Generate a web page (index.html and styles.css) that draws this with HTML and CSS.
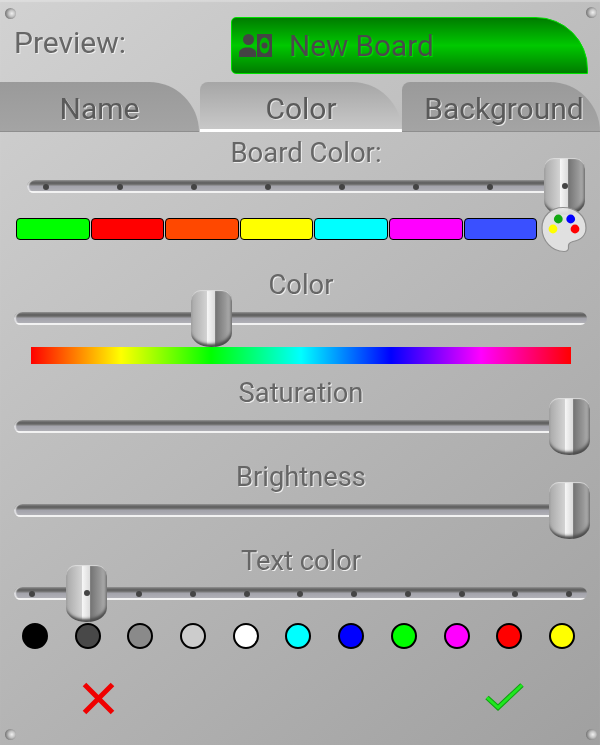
FILE: index.html
```html
<!DOCTYPE html>
<html lang="en">
<head>
    <meta charset="UTF-8">
    <title>Board Color</title>
    <link rel="stylesheet" href="styles.css">
</head>
<body>
    <div class="panel">
        <span class="rivet rivet-tl"></span>
        <span class="rivet rivet-tr"></span>
        <span class="rivet rivet-bl"></span>
        <span class="rivet rivet-br"></span>

        <div class="preview-row">
            <div class="preview-label">Preview:</div>
            <div class="preview-chip">
                <svg class="board-icon" width="34" height="24" viewBox="0 0 34 24">
                    <circle cx="9.500" cy="5.500" r="5.500" fill="#444"/>
                    <path d="M0 23v-4c0-3.500 4-5.500 8.500-5.500s8.500 2 8.500 5.500v4z" fill="#444"/>
                    <rect x="18" y="0" width="15" height="23" fill="#444"/>
                    <ellipse cx="25.500" cy="11.500" rx="5" ry="8" fill="#00b400"/>
                    <circle cx="25.500" cy="11.500" r="3" fill="#444"/>
                </svg>
                <span class="preview-text">New Board</span>
            </div>
        </div>

        <div class="tabs">
            <div class="tab tab-name">Name</div>
            <div class="tab tab-color">Color</div>
            <div class="tab tab-background">Background</div>
        </div>

        <div class="field-label label-board">Board Color:</div>
        <div class="track track-board">
            <i></i><i></i><i></i><i></i><i></i><i></i><i></i><i></i>
            <div class="thumb" style="left: 517px"><i></i></div>
        </div>
        <div class="swatch-row">
            <div class="swatch" style="background: #00ff00"></div>
            <div class="swatch" style="background: #ff0000"></div>
            <div class="swatch" style="background: #ff4800"></div>
            <div class="swatch" style="background: #ffff00"></div>
            <div class="swatch" style="background: #00ffff"></div>
            <div class="swatch" style="background: #ff00ff"></div>
            <div class="swatch" style="background: #3a50ff"></div>
            <svg class="palette" width="48" height="48" viewBox="0 0 48 48">
                <path d="M23 1.500C36 1.500 46 10 46 22C46 29 41 34 33 35.500C29 36.500 28 38 28.500 41C29 44 27 45.500 24 45.500C12 45.500 2 35 2 22C2 10 11 1.500 23 1.500z" fill="#e4e4e4" fill-opacity="0.92" stroke="#8f8f8f" stroke-width="1.200"/>
                <circle cx="18.300" cy="13" r="4.400" fill="#12a812"/>
                <circle cx="30.700" cy="13" r="4.400" fill="#0000ff"/>
                <circle cx="13" cy="23" r="4.400" fill="#ffff00"/>
                <circle cx="35" cy="23" r="4.400" fill="#ff0000"/>
            </svg>
        </div>

        <div class="field-label label-color">Color</div>
        <div class="track track-full">
            <div class="thumb" style="left: 177px"></div>
        </div>
        <div class="hue-bar"></div>

        <div class="field-label label-saturation">Saturation</div>
        <div class="track track-full">
            <div class="thumb" style="left: 535px"></div>
        </div>

        <div class="field-label label-brightness">Brightness</div>
        <div class="track track-full">
            <div class="thumb" style="left: 535px"></div>
        </div>

        <div class="field-label label-text">Text color</div>
        <div class="track track-full track-text">
            <i></i><i></i><i></i><i></i><i></i><i></i><i></i><i></i><i></i><i></i><i></i>
            <div class="thumb" style="left: 52px"><i></i></div>
        </div>

        <div class="dot-row">
            <div class="dot" style="background: #000000"></div>
            <div class="dot" style="background: #484848"></div>
            <div class="dot" style="background: #8a8a8a"></div>
            <div class="dot" style="background: #cccccc"></div>
            <div class="dot" style="background: #ffffff"></div>
            <div class="dot" style="background: #00ffff"></div>
            <div class="dot" style="background: #0000ff"></div>
            <div class="dot" style="background: #00ff00"></div>
            <div class="dot" style="background: #ff00ff"></div>
            <div class="dot" style="background: #ff0000"></div>
            <div class="dot" style="background: #ffff00"></div>
        </div>

        <div class="actions">
            <svg width="33" height="33" viewBox="0 0 33 33">
                <path d="M2.500 2.500l28 28M30.500 2.500l-28 28" stroke="#f00000" stroke-width="5" fill="none"/>
            </svg>
            <svg width="40" height="32" viewBox="0 0 40 32">
                <path d="M2 15.500l11 10L37 3" stroke="#119f11" stroke-width="5" fill="none"/>
                <path d="M2 15.500l11 10L37 3" stroke="#1fe81f" stroke-width="3" fill="none"/>
            </svg>
        </div>
    </div>
</body>
</html>
```

FILE: styles.css
```css
html, body {
    margin: 0;
    padding: 0;
}
body {
    font-family: Roboto, sans-serif;
    color: #666;
}
.panel {
    position: relative;
    width: 600px;
    height: 745px;
    overflow: hidden;
    background: linear-gradient(141deg, #d2d2d2 0%, #a0a0a0 100%);
    box-shadow: inset 0 2px 1px rgba(255, 255, 255, 0.25);
}
.rivet {
    position: absolute;
    width: 11px;
    height: 11px;
    border-radius: 50%;
    background: radial-gradient(circle at 62% 50%, #f0f0f0 0%, #c4c4c4 35%, #777 75%, #999 100%);
}
.rivet-tl { left: 5px; top: 8px; }
.rivet-tr { left: 586px; top: 7px; }
.rivet-bl { left: 5px; top: 729px; }
.rivet-br { left: 586px; top: 729px; }

.preview-row {
    display: flex;
    height: 82px;
    box-sizing: border-box;
    padding: 17px 12px 0 14px;
}
.preview-label {
    width: 217px;
    font-size: 30px;
    line-height: 52px;
    text-shadow: 1px 1px 0 #eee;
    will-change: transform;
}
.preview-chip {
    display: flex;
    align-items: center;
    box-sizing: border-box;
    width: 357px;
    height: 57px;
    padding-left: 7px;
    border: 1px solid #00e000;
    border-radius: 5px 52px 0 5px;
    background: linear-gradient(180deg, #007c00 0%, #00c800 50%, #007c00 100%);
}
.preview-text {
    margin-left: 16px;
    font-size: 29.700px;
    color: #4a4a4a;
    text-shadow: 1px 1px 1px #00e000;
    will-change: transform;
}

.tabs {
    display: flex;
    height: 50px;
}
.tab {
    box-sizing: border-box;
    font-size: 30px;
    line-height: 53px;
    text-align: center;
    color: #5a5a5a;
    text-shadow: 1px 1px 0 #e8e8e8;
    background: linear-gradient(180deg, #9a9a9a 0%, #a4a4a4 100%);
    border-bottom: 1px solid #8e8e8e;
    will-change: transform;
}
.tab-name {
    width: 199px;
    border-radius: 0 50px 0 0;
}
.tab-color {
    width: 202px;
    margin-left: 1px;
    border-radius: 8px 50px 0 0;
    background: linear-gradient(180deg, #a6a6a6 0%, #c8c8c8 100%);
    border-bottom: 3px solid #fff;
}
.tab-background {
    width: 198px;
    padding-left: 6px;
    border-radius: 8px 50px 0 0;
}

.field-label {
    height: 28px;
    padding-left: 2px;
    line-height: 30px;
    font-size: 27.300px;
    text-align: center;
    text-shadow: 1px 1px 0 #eee;
    will-change: transform;
}
.label-board {
    margin-top: 6px;
    padding-left: 12px;
    font-size: 27.500px;
}
.label-color { margin-top: 30px; }
.label-saturation { margin-top: 14px; }
.label-brightness { margin-top: 29px; }
.label-text { margin-top: 29px; }

.track {
    position: relative;
    display: flex;
    align-items: center;
    justify-content: space-between;
    box-sizing: border-box;
    height: 13px;
    margin-top: 14px;
    padding: 0 15px;
    border-radius: 7px;
    background: linear-gradient(180deg, #8a8a8a 0, #5c5c5c 3px, #7c7c7c 5px, #a2a2aa 6px, #b0b0b6 11px, #f2f2f2 11.500px, #f2f2f2 12.500px, transparent 13px);
    box-shadow: inset 2px 0 1px rgba(255, 255, 255, 0.65);
}
.track > i {
    width: 6px;
    height: 6px;
    border-radius: 50%;
    background: #444;
}
.track-board {
    margin-left: 27px;
    margin-right: 17px;
    padding: 0 16px;
}
.track-full {
    margin-left: 14px;
    margin-right: 13px;
}
.track-text { margin-top: 13px; }

.thumb {
    position: absolute;
    top: -22px;
    display: flex;
    align-items: center;
    justify-content: center;
    box-sizing: border-box;
    width: 41px;
    height: 57px;
    border-radius: 10px 10px 20px 20px / 10px 10px 14px 14px;
    background: linear-gradient(90deg, #a8a8a8 0%, #d2d2d2 38%, #f6f6f6 40%, #dcdcdc 58%, #747474 60%, #9a9a9a 85%, #b8b8b8 100%);
    box-shadow: inset 0 1px 1px #ddd, inset -1px -3px 3px #4c4c4c;
}
.thumb > i {
    width: 6px;
    height: 6px;
    margin-top: -1px;
    border-radius: 50%;
    background: #444;
}

.swatch-row {
    position: relative;
    display: flex;
    gap: 1px;
    height: 22px;
    margin: 25px 0 0 16px;
}
.swatch {
    box-sizing: border-box;
    width: 73.600px;
    height: 22px;
    border: 1.500px solid #000;
    border-radius: 4px;
}
.palette {
    position: absolute;
    left: 524px;
    top: -12px;
}

.hue-bar {
    height: 17px;
    margin: 22px 29px 0 31px;
    background: linear-gradient(90deg, #ff0000 0%, #ffff00 16.670%, #00ff00 33.330%, #00ffff 50%, #0000ff 66.670%, #ff00ff 83.330%, #ff0000 100%);
}

.dot-row {
    display: flex;
    justify-content: space-between;
    margin: 23px 25px 0 22px;
}
.dot {
    box-sizing: border-box;
    width: 26px;
    height: 26px;
    border: 2px solid #000;
    border-radius: 50%;
}

.actions {
    display: flex;
    justify-content: space-between;
    margin: 33px 75px 0 82px;
}
```
